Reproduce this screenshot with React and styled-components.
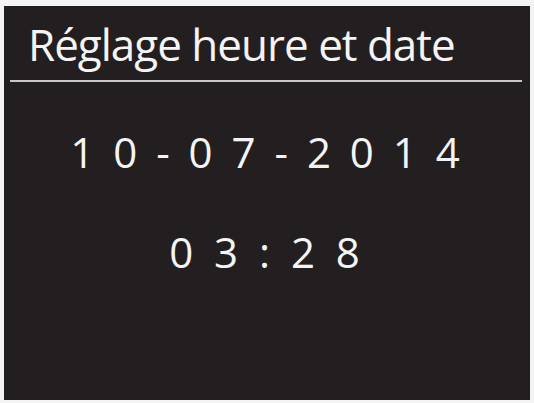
import styled, { createGlobalStyle } from 'styled-components';

const GlobalStyle = createGlobalStyle`
    html, body {
        margin: 0;
        padding: 0;
        background: #f4f4f4;
    }
`;

const Screen = styled.div`
    box-sizing: border-box;
    width: 526px;
    height: 394px;
    margin: 6px 0 0 4px;
    background-color: #231f20;
    color: #f4f4f4;
    font-family: "Open Sans", "Noto Sans", sans-serif;
    display: flex;
    flex-direction: column;
`;

const Header = styled.div`
    padding: 8px 0 0 6px;
`;

const Title = styled.h1`
    margin: 0;
    padding-left: 18px;
    font-size: 44px;
    font-weight: 400;
    line-height: 60px;
    letter-spacing: -1px;
`;

const Rule = styled.div`
    width: 512px;
    height: 2px;
    margin-top: 6px;
    background-color: #c8c8c8;
`;

const Value = styled.div`
    text-align: center;
    font-size: ${p => p.size}px;
    line-height: 50px;
    letter-spacing: ${p => p.spacing}px;
    margin-top: ${p => p.top}px;
    white-space: pre;
`;

const App = () => {
    return (
        <>
            <GlobalStyle />
            <Screen>
                <Header>
                    <Title>Réglage heure et date</Title>
                    <Rule />
                </Header>
                <Value size={42} spacing={4} top={45}>1 0 - 0 7 - 2 0 1 4</Value>
                <Value size={42} spacing={5} top={50}>0 3 : 2 8</Value>
            </Screen>
        </>
    );
};

export default App;
